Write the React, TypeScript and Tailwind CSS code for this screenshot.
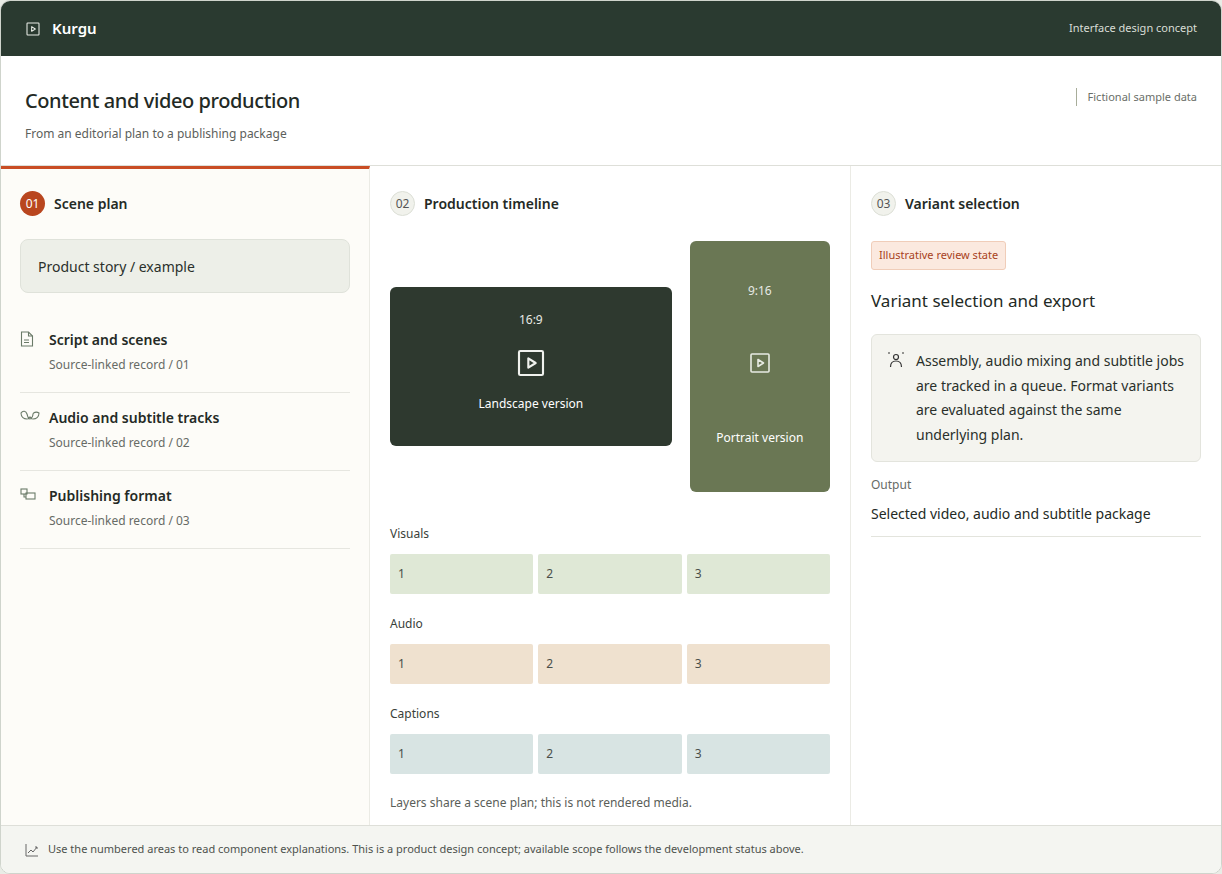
import React from "react";

const Play = ({ s = 16, c = "currentColor" }: { s?: number; c?: string }) => (
  <svg width={s} height={s} viewBox="0 0 24 24" fill="none" stroke={c} strokeWidth="1.6">
    <rect x="3" y="3" width="18" height="18" rx="1" />
    <path d="M10 8.5v7l5.5-3.5z" strokeLinejoin="round" />
  </svg>
);

const Num = ({ n, active }: { n: string; active?: boolean }) => (
  <div className={`w-[25px] h-[25px] rounded-full flex items-center justify-center text-[12px] ${active ? "bg-[#b9461f] text-white" : "bg-[#f1f2ec] border border-[#dcdfd6] text-[#555]"}`}>{n}</div>
);

const Track = ({ label, bg }: { label: string; bg: string }) => (
  <div className="flex flex-col">
    <div className="text-[12px] text-[#3a3f3a] mb-[11px]">{label}</div>
    <div className="grid grid-cols-3 gap-[5px]">
      {["1", "2", "3"].map((n) => (
        <div key={n} className={`h-[40px] ${bg} rounded-[2px] flex items-center px-2 text-[12px] text-[#4a4f4a]`}>{n}</div>
      ))}
    </div>
  </div>
);

const Record = ({ icon, title, sub }: { icon: React.ReactNode; title: string; sub: string }) => (
  <div className="border-b border-[#e6e6e0] pt-[14px] pb-[18px] flex gap-[12px]">
    <div className="w-[17px] pt-[2px] text-[#6a7a68]">{icon}</div>
    <div>
      <div className="text-[14px] font-semibold text-[#242a25]">{title}</div>
      <div className="text-[12px] text-[#676b66] mt-[6px]">{sub}</div>
    </div>
  </div>
);

export default function App() {
  return (
    <div className="w-[1222px] h-[874px] bg-[#e9ece6] font-['Inter',sans-serif]">
      <div className="w-full h-full border border-[#cfd4cc] rounded-[10px] overflow-hidden flex flex-col bg-white">
        <div className="h-[55px] bg-[#2a3a30] flex items-center justify-between px-[24px] text-white shrink-0">
          <div className="flex items-center gap-[11px]">
            <Play s={16} c="#e8ece6" />
            <span className="text-[15px] font-semibold">Kurgu</span>
          </div>
          <span className="text-[11px] text-[#d9ded7]">Interface design concept</span>
        </div>
        <div className="h-[110px] shrink-0 flex justify-between px-[24px] pt-[30px] border-b border-[#dedfd9]">
          <div>
            <div className="text-[20px] text-[#232a25] font-medium tracking-[-0.02em]">Content and video production</div>
            <div className="text-[12px] text-[#5c605b] mt-[9px]">From an editorial plan to a publishing package</div>
          </div>
          <div className="border-l border-[#a8ad9a] h-[18px] pl-[11px] mt-[2px] text-[11px] text-[#6a6e68] flex items-center">Fictional sample data</div>
        </div>
        <div className="flex-1 flex min-h-0">
          <div className="w-[369px] bg-[#fdfcf8] border-t-[3px] border-[#c94d24] border-r border-r-[#ebebe5] px-[19px] pt-[22px]">
            <div className="flex items-center gap-[9px]"><Num n="01" active /><span className="text-[14px] font-semibold text-[#242a25]">Scene plan</span></div>
            <div className="mt-[23px] h-[54px] rounded-[8px] bg-[#edefe8] border border-[#dfe2da] flex items-center px-[17px] text-[14px] text-[#2a302b]">Product story / example</div>
            <div className="mt-[22px]">
              <Record title="Script and scenes" sub="Source-linked record / 01" icon={<svg width="14" height="16" viewBox="0 0 14 16" fill="none" stroke="currentColor" strokeWidth="1.1"><path d="M1.5 1h7l4 4v10h-11z" /><path d="M8.5 1v4h4M4 9h5M4 11.5h5" /></svg>} />
              <Record title="Audio and subtitle tracks" sub="Source-linked record / 02" icon={<svg width="20" height="14" viewBox="0 0 20 14" fill="none" stroke="currentColor" strokeWidth="1.1"><path d="M1 4c2-3 5-2 6 1s1 5 3 5 3-4 3-5 3-3 6-1c0 4-3 6-6 6-2 0-3-2-3-2s-1 2-3 2c-3 0-6-2-6-6z" /></svg>} />
              <Record title="Publishing format" sub="Source-linked record / 03" icon={<svg width="17" height="14" viewBox="0 0 17 14" fill="none" stroke="currentColor" strokeWidth="1.1"><rect x="1" y="2" width="6" height="5" /><rect x="6" y="6" width="9" height="6" /><path d="M4 7v3h2" /></svg>} />
            </div>
          </div>
          <div className="w-[481px] border-r border-[#ebebe5] px-[20px] pt-[25px]">
            <div className="flex items-center gap-[9px]"><Num n="02" /><span className="text-[14px] font-semibold text-[#242a25]">Production timeline</span></div>
            <div className="mt-[25px] flex gap-[18px] items-center">
              <div className="w-[283px] h-[159px] rounded-[6px] bg-[#2e392f] flex flex-col items-center text-white pt-[24px]">
                <div className="text-[12px] text-[#e6e9e4]">16:9</div>
                <div className="mt-[18px]"><Play s={32} c="#f0f2ee" /></div>
                <div className="mt-[16px] text-[12px]">Landscape version</div>
              </div>
              <div className="w-[141px] h-[251px] rounded-[6px] bg-[#6a7754] flex flex-col items-center text-white pt-[41px]">
                <div className="text-[12px] text-[#e6e9e4]">9:16</div>
                <div className="mt-[51px]"><Play s={24} c="#e8ebe3" /></div>
                <div className="mt-[54px] text-[12px]">Portrait version</div>
              </div>
            </div>
            <div className="mt-[33px] flex flex-col gap-[21px]">
              <Track label="Visuals" bg="bg-[#dfe8d6]" />
              <Track label="Audio" bg="bg-[#efe1cf]" />
              <Track label="Captions" bg="bg-[#d8e4e3]" />
            </div>
            <div className="mt-[20px] text-[12px] text-[#5a5e59]">Layers share a scene plan; this is not rendered media.</div>
          </div>
          <div className="flex-1 px-[20px] pt-[25px]">
            <div className="flex items-center gap-[9px]"><Num n="03" /><span className="text-[14px] font-semibold text-[#242a25]">Variant selection</span></div>
            <div className="mt-[25px] inline-block px-[7px] py-[5px] rounded-[3px] bg-[#fbe9df] border border-[#f0cdb9] text-[11px] text-[#a8421d]">Illustrative review state</div>
            <div className="mt-[18px] text-[17px] text-[#232a25]">Variant selection and export</div>
            <div className="mt-[21px] rounded-[6px] bg-[#f4f4ef] border border-[#e3e4dd] px-[15px] py-[14px] flex gap-[11px]">
              <svg width="18" height="16" viewBox="0 0 18 16" fill="none" stroke="#333" strokeWidth="1.2" className="mt-[3px] shrink-0"><circle cx="9" cy="5" r="2.5" /><path d="M3.5 15c0-4 2.5-6 5.5-6s5.5 2 5.5 6M1 1h2M15 1h2" /></svg>
              <div className="text-[14px] leading-[24.5px] text-[#2a302b]">Assembly, audio mixing and subtitle jobs are tracked in a queue. Format variants are evaluated against the same underlying plan.</div>
            </div>
            <div className="mt-[14px] text-[12px] text-[#676b66]">Output</div>
            <div className="mt-[9px] pb-[12px] border-b border-[#e3e4dd] text-[14px] text-[#242a25]">Selected video, audio and subtitle package</div>
          </div>
        </div>
        <div className="h-[48px] shrink-0 bg-[#f4f5f1] border-t border-[#dedfd9] flex items-center gap-[9px] px-[24px] text-[11px] text-[#4e524d]">
          <svg width="14" height="14" viewBox="0 0 14 14" fill="none" stroke="#666" strokeWidth="1"><path d="M1 1v12h12M3 10l3-3 2 2 4-5M10 4h2v2" /></svg>
          Use the numbered areas to read component explanations. This is a product design concept; available scope follows the development status above.
        </div>
      </div>
    </div>
  );
}
